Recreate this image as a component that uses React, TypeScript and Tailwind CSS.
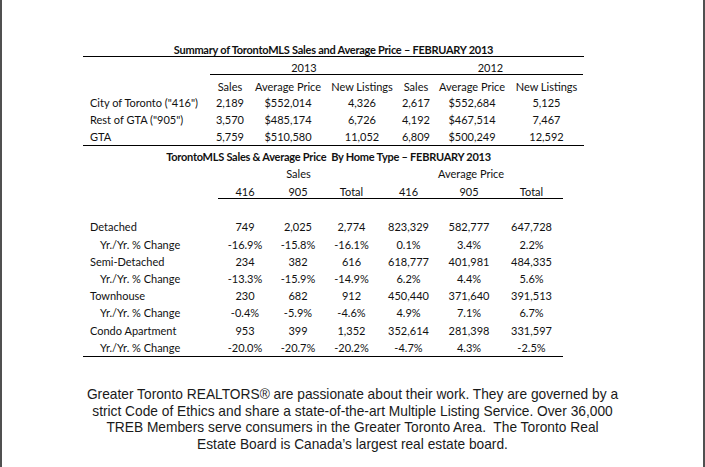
import React from "react";

const tableFont = { fontFamily: "Lato, 'Open Sans', sans-serif" };

const summaryRows = [
    ["City of Toronto (\"416\")", "2,189", "$552,014", "4,326", "2,617", "$552,684", "5,125"],
    ["Rest of GTA (\"905\")", "3,570", "$485,174", "6,726", "4,192", "$467,514", "7,467"],
    ["GTA", "5,759", "$510,580", "11,052", "6,809", "$500,249", "12,592"],
];

const typeRows = [
    ["Detached", "749", "2,025", "2,774", "823,329", "582,777", "647,728"],
    ["Yr./Yr. % Change", "-16.9%", "-15.8%", "-16.1%", "0.1%", "3.4%", "2.2%"],
    ["Semi-Detached", "234", "382", "616", "618,777", "401,981", "484,335"],
    ["Yr./Yr. % Change", "-13.3%", "-15.9%", "-14.9%", "6.2%", "4.4%", "5.6%"],
    ["Townhouse", "230", "682", "912", "450,440", "371,640", "391,513"],
    ["Yr./Yr. % Change", "-0.4%", "-5.9%", "-4.6%", "4.9%", "7.1%", "6.7%"],
    ["Condo Apartment", "953", "399", "1,352", "352,614", "281,398", "331,597"],
    ["Yr./Yr. % Change", "-20.0%", "-20.7%", "-20.2%", "-4.7%", "4.3%", "-2.5%"],
];

const t1 = "grid grid-cols-[127px_40px_76px_72px_36px_76px_73px]";
const t2 = "grid grid-cols-[135px_54px_52px_55px_59px_62px_63px]";

function SummaryTable() {
    return (
        <div className="w-[501px] text-[11px] text-[#111]" style={tableFont}>
            <div className="h-[14px] leading-[13px] text-center font-bold tracking-[-0.25px] border-b border-black">
                Summary of TorontoMLS Sales and Average Price – FEBRUARY 2013
            </div>
            <div className={`${t1} h-[18px]`}>
                <div />
                <div className="col-span-3 border-b border-black text-center pt-[4px] leading-[13px]">2013</div>
                <div className="col-span-3 border-b border-black text-center pt-[4px] leading-[13px]">2012</div>
            </div>
            <div className={`${t1} h-[19px] pt-[5px] leading-[13px] text-center`}>
                <div />
                <div>Sales</div>
                <div>Average Price</div>
                <div>New Listings</div>
                <div>Sales</div>
                <div>Average Price</div>
                <div>New Listings</div>
            </div>
            <div className="border-b border-black">
                {summaryRows.map((r) => (
                    <div key={r[0]} className={`${t1} h-[17px] pt-[1px] leading-[16px]`}>
                        <div className="pl-[7px] whitespace-nowrap">{r[0]}</div>
                        {r.slice(1).map((v, i) => (
                            <div key={i} className="text-center">{v}</div>
                        ))}
                    </div>
                ))}
            </div>
        </div>
    );
}

function HomeTypeTable() {
    return (
        <div className="w-[480px] text-[11px] text-[#111]" style={tableFont}>
            <div className="mt-[3px] h-[16px] leading-[16px] font-bold tracking-[-0.25px] w-[501px] text-center pr-[10px] whitespace-nowrap">
                TorontoMLS Sales &amp; Average Price&nbsp; By Home Type – FEBRUARY 2013
            </div>
            <div className={`${t2} h-[17px] leading-[17px] text-center`}>
                <div />
                <div className="col-span-3">Sales</div>
                <div className="col-span-3">Average Price</div>
            </div>
            <div className={`${t2} h-[17px] text-center`}>
                <div />
                {["416", "905", "Total", "416", "905", "Total"].map((h, i) => (
                    <div key={i} className="border-b border-black pt-[3px] leading-[13px]">{h}</div>
                ))}
            </div>
            <div className="h-[19.4px]" />
            <div className="border-b border-black">
                {typeRows.map((r, idx) => (
                    <div key={idx} className={`${t2} h-[17.2px] pt-[1px] leading-[16.2px]`}>
                        <div className={idx % 2 ? "pl-[17px]" : "pl-[7px]"}>{r[0]}</div>
                        {r.slice(1).map((v, i) => (
                            <div key={i} className="text-center">{v}</div>
                        ))}
                    </div>
                ))}
            </div>
        </div>
    );
}

export default function App() {
    return (
        <div className="w-[705px] h-[467px] bg-white border-x-2 border-[#505050] overflow-hidden">
            <div className="pt-[43px] pl-[81px]">
                <SummaryTable />
                <HomeTypeTable />
            </div>
            <p
                className="mt-[30px] text-center text-[13.75px] leading-[16.7px] text-[#1a1a1a] whitespace-nowrap"
                style={{ fontFamily: "'Liberation Sans', Arial, sans-serif" }}
            >
                Greater Toronto REALTORS® are passionate about their work. They are governed by a
                <br />
                strict Code of Ethics and share a state-of-the-art Multiple Listing Service. Over 36,000
                <br />
                TREB Members serve consumers in the Greater Toronto Area.&nbsp; The Toronto Real
                <br />
                Estate Board is Canada’s largest real estate board.
            </p>
        </div>
    );
}
